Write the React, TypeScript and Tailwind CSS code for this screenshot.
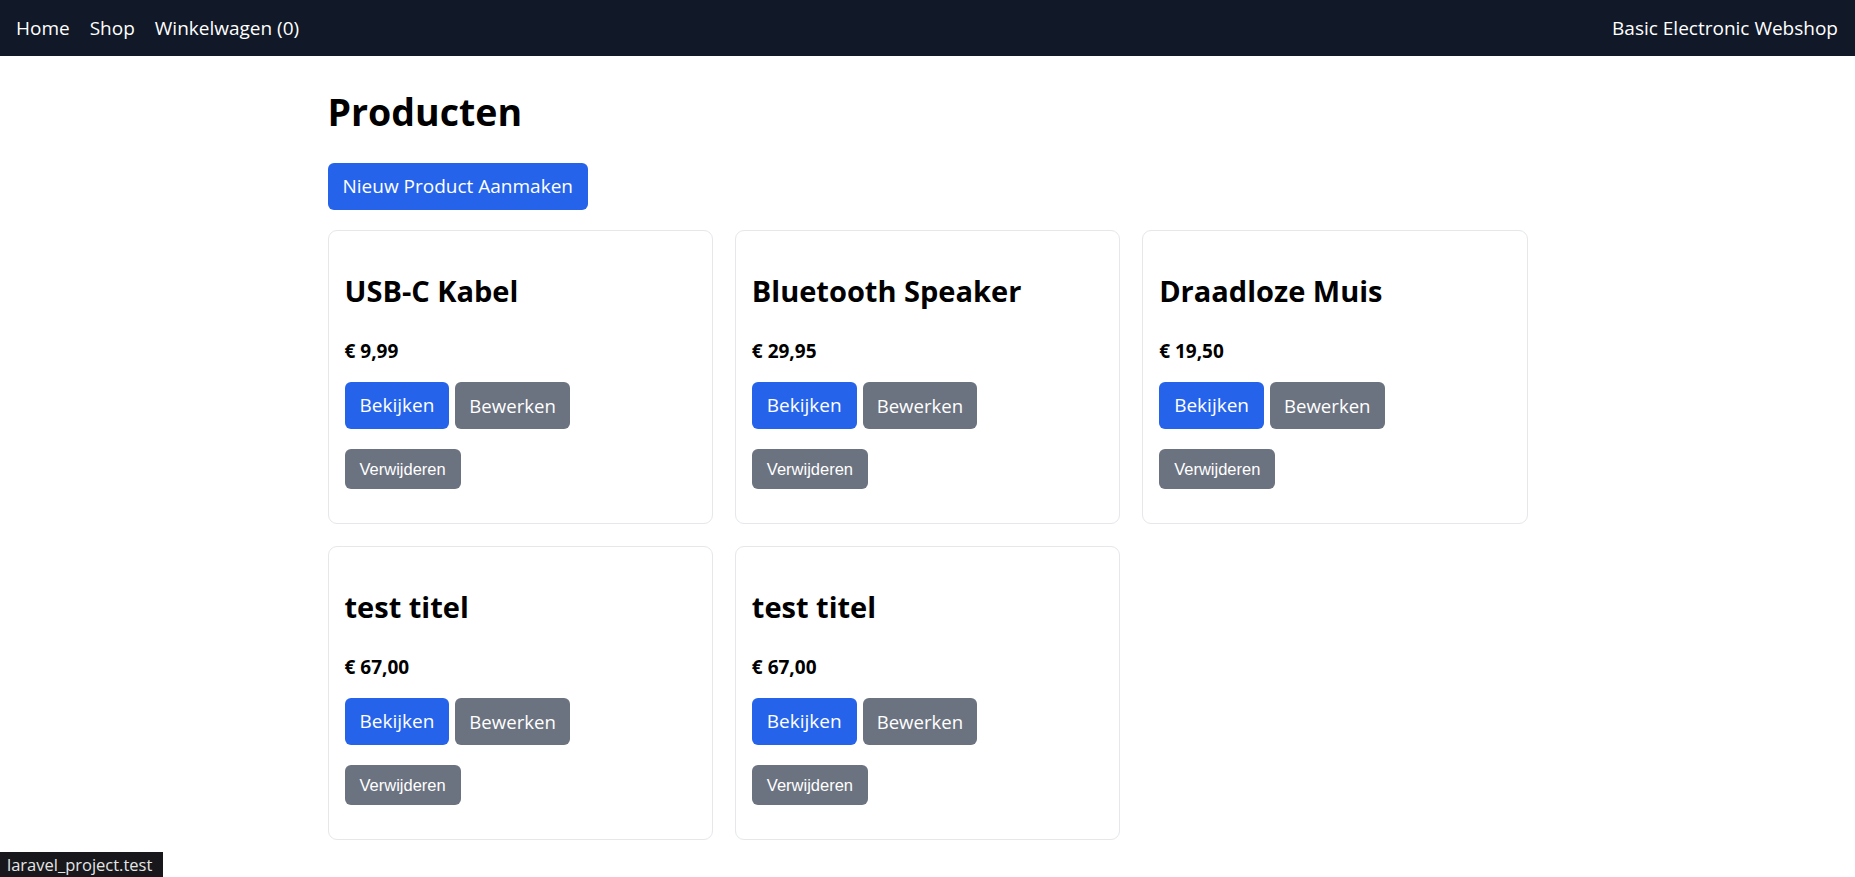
import React from "react";

const products = [
  { name: "USB-C Kabel", price: "€ 9,99" },
  { name: "Bluetooth Speaker", price: "€ 29,95" },
  { name: "Draadloze Muis", price: "€ 19,50" },
  { name: "test titel", price: "€ 67,00" },
  { name: "test titel", price: "€ 67,00" },
];

function Card({ name, price }: { name: string; price: string }) {
  return (
    <div className="border border-[#e5e7eb] rounded-[9px] px-4 pt-4 pb-[34px] bg-white">
      <h2 className="mt-[24px] text-[29px] leading-[40px] font-bold text-black">{name}</h2>
      <p className="mt-[26px] text-[19px] leading-[28px] font-bold text-black">{price}</p>
      <div className="mt-[17px] flex gap-[6px]">
        <button className="h-[47px] px-[15px] rounded-[6px] bg-[#2563eb] text-white text-[19px]">
          Bekijken
        </button>
        <button className="h-[47px] px-[14px] rounded-[6px] bg-[#6b7280] text-white text-[18.6px]">
          Bewerken
        </button>
      </div>
      <div className="mt-[20px]">
        <button
          className="h-[40px] px-[15px] rounded-[6px] bg-[#6b7280] text-white text-[16.5px]"
          style={{ fontFamily: '"Liberation Sans", Arial, sans-serif' }}
        >
          Verwijderen
        </button>
      </div>
    </div>
  );
}

export default function App() {
  return (
    <div
      className="min-h-[877px] bg-white text-black"
      style={{ fontFamily: '"Open Sans", "Noto Sans", sans-serif' }}
    >
      <nav className="h-[56px] bg-[#111827] text-white flex items-center justify-between pl-4 pr-[17px]">
        <div className="flex items-center gap-[20px] text-[19px]">
          <a>Home</a>
          <a>Shop</a>
          <a>Winkelwagen (0)</a>
        </div>
        <div className="text-[19px]">Basic Electronic Webshop</div>
      </nav>
      <main className="w-[1200px] mx-auto">
        <h1 className="mt-[32px] text-[37.5px] leading-[48px] font-bold">Producten</h1>
        <button className="mt-[27px] h-[47px] px-[15px] rounded-[6px] bg-[#2563eb] text-white text-[19px]">
          Nieuw Product Aanmaken
        </button>
        <div className="mt-[20px] grid grid-cols-3 gap-[22px]">
          {products.map((p, i) => (
            <Card key={i} name={p.name} price={p.price} />
          ))}
        </div>
      </main>
      <div
        className="fixed left-0 bottom-0 h-[25px] w-[163px] bg-[#17171c] text-[#e5e5e5] text-[16.5px] leading-[25px] pl-[7px]"
        style={{ fontFamily: '"Open Sans", sans-serif' }}
      >
        laravel_project.test
      </div>
    </div>
  );
}
